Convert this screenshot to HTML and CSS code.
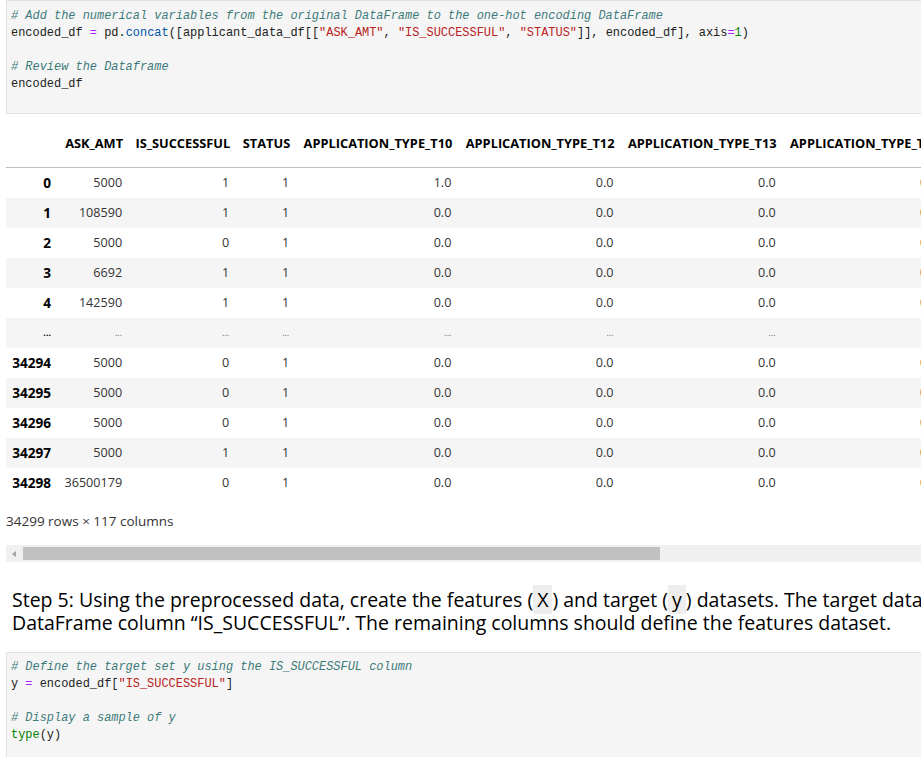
FILE: index.html
```html
<!DOCTYPE html>
<html>
<head>
<meta charset="utf-8">
<link rel="stylesheet" href="styles.css">
</head>
<body>
<div class="nb">
  <div class="cell code-cell first">
<pre class="code"><span class="c"># Add the numerical variables from the original DataFrame to the one-hot encoding DataFrame</span>
encoded_df <span class="o">=</span> pd.<span class="f">concat</span>([applicant_data_df[[<span class="s">"ASK_AMT"</span>, <span class="s">"IS_SUCCESSFUL"</span>, <span class="s">"STATUS"</span>]], encoded_df], axis<span class="o">=</span><span class="n">1</span>)

<span class="c"># Review the Dataframe</span>
encoded_df</pre>
  </div>

  <div class="output">
    <div class="table-wrap">
      <table class="df">
        <colgroup>
          <col class="w-idx"><col class="w-ask"><col class="w-succ"><col class="w-status">
          <col class="w-type"><col class="w-type"><col class="w-type"><col class="w-type"><col class="w-type">
        </colgroup>
        <thead>
          <tr><th></th><th>ASK_AMT</th><th>IS_SUCCESSFUL</th><th>STATUS</th><th>APPLICATION_TYPE_T10</th><th>APPLICATION_TYPE_T12</th><th>APPLICATION_TYPE_T13</th><th>APPLICATION_TYPE_T14</th><th>APPLICATION_TYPE_T15</th></tr>
        </thead>
        <tbody>
          <tr><th>0</th><td>5000</td><td>1</td><td>1</td><td>1.0</td><td>0.0</td><td>0.0</td><td>0.0</td><td>0.0</td></tr>
          <tr><th>1</th><td>108590</td><td>1</td><td>1</td><td>0.0</td><td>0.0</td><td>0.0</td><td>0.0</td><td>0.0</td></tr>
          <tr><th>2</th><td>5000</td><td>0</td><td>1</td><td>0.0</td><td>0.0</td><td>0.0</td><td>0.0</td><td>0.0</td></tr>
          <tr><th>3</th><td>6692</td><td>1</td><td>1</td><td>0.0</td><td>0.0</td><td>0.0</td><td>0.0</td><td>0.0</td></tr>
          <tr><th>4</th><td>142590</td><td>1</td><td>1</td><td>0.0</td><td>0.0</td><td>0.0</td><td>0.0</td><td>0.0</td></tr>
          <tr class="dots"><th>...</th><td>...</td><td>...</td><td>...</td><td>...</td><td>...</td><td>...</td><td>...</td><td>...</td></tr>
          <tr><th>34294</th><td>5000</td><td>0</td><td>1</td><td>0.0</td><td>0.0</td><td>0.0</td><td>0.0</td><td>0.0</td></tr>
          <tr><th>34295</th><td>5000</td><td>0</td><td>1</td><td>0.0</td><td>0.0</td><td>0.0</td><td>0.0</td><td>0.0</td></tr>
          <tr><th>34296</th><td>5000</td><td>0</td><td>1</td><td>0.0</td><td>0.0</td><td>0.0</td><td>0.0</td><td>0.0</td></tr>
          <tr><th>34297</th><td>5000</td><td>1</td><td>1</td><td>0.0</td><td>0.0</td><td>0.0</td><td>0.0</td><td>0.0</td></tr>
          <tr><th>34298</th><td>36500179</td><td>0</td><td>1</td><td>0.0</td><td>0.0</td><td>0.0</td><td>0.0</td><td>0.0</td></tr>
        </tbody>
      </table>
      <p class="shape">34299 rows × 117 columns</p>
    </div>
    <div class="hscroll">
      <div class="arrow"></div>
      <div class="thumb"></div>
    </div>
  </div>

  <div class="md">
    <p>Step 5: Using the preprocessed data, create the features (<code>X</code>) and target (<code>y</code>) datasets. The target dataset should be defined by the preprocessed<br>DataFrame column “IS_SUCCESSFUL”. The remaining columns should define the features dataset.</p>
  </div>

  <div class="cell code-cell second">
<pre class="code"><span class="c"># Define the target set y using the IS_SUCCESSFUL column</span>
y <span class="o">=</span> encoded_df[<span class="s">"IS_SUCCESSFUL"</span>]

<span class="c"># Display a sample of y</span>
<span class="b">type</span>(y)</pre>
  </div>
</div>
</body>
</html>
```

FILE: styles.css
```css
html, body {
  margin: 0;
  padding: 0;
  background: #ffffff;
  overflow: hidden;
}

.nb {
  width: 1400px;
  padding-left: 6px;
  font-family: "Open Sans", "Noto Sans", sans-serif;
  color: #000;
}

.cell.code-cell {
  background: #f5f5f5;
  border: 1px solid #e0e0e0;
}

.cell.first {
  padding: 7px 4px 20px 4px;
}

.cell.second {
  margin-top: 18px;
  padding: 6px 4px 30px 4px;
}

.code {
  margin: 0;
  font-family: "Liberation Mono", "DejaVu Sans Mono", monospace;
  font-size: 11.95px;
  line-height: 17px;
  color: #212121;
  white-space: pre;
}

.code .c { color: #3d7b7b; font-style: italic; }
.code .s { color: #ba2121; }
.code .o { color: #aa22ff; }
.code .n { color: #008000; }
.code .f { color: #0055aa; }
.code .b { color: #008000; }

.output {
  padding-top: 14px;
}

.table-wrap {
  width: 915px;
  overflow: hidden;
}

.df {
  border-collapse: collapse;
  table-layout: fixed;
  width: 1100px;
  font-size: 12.6px;
  line-height: 18px;
  white-space: nowrap;
}

.w-idx { width: 51px; }
.w-ask { width: 71px; }
.w-succ { width: 107px; }
.w-status { width: 60px; }
.w-type { width: 162px; }

.df th, .df td {
  padding: 6px 6px;
  text-align: right;
  overflow: hidden;
}

.df thead th {
  font-weight: 700;
  font-size: 12.8px;
  color: #000;
  padding: 6px 5px 15px 5px;
  border-bottom: 1px solid #bdbdbd;
}

.df tbody th {
  font-weight: 700;
  font-size: 13.6px;
  color: #000;
}

.df tbody td {
  color: #333;
  font-weight: 400;
}

.df tbody tr:nth-child(even) {
  background: #f5f5f5;
}

.df tr.dots td, .df tr.dots th {
  font-size: 9px;
  color: #666;
}

.df tr.dots th {
  color: #000;
}

.shape {
  margin: 14px 0 0 0;
  font-size: 13.5px;
  line-height: 18px;
  color: #333;
}

.hscroll {
  margin-top: 15px;
  height: 17px;
  background: #f0f0f0;
  display: flex;
  align-items: center;
  width: 1200px;
}

.arrow {
  width: 0;
  height: 0;
  margin-left: 6px;
  margin-right: 7px;
  border-top: 3.5px solid transparent;
  border-bottom: 3.5px solid transparent;
  border-right: 4px solid #a3a3a3;
}

.thumb {
  width: 637px;
  height: 13px;
  background: #c1c1c1;
}

.md {
  padding: 26px 0 0 6px;
}

.md p {
  margin: 0;
  font-size: 19.5px;
  line-height: 23px;
  color: #000;
  white-space: nowrap;
}

.md code {
  font-family: inherit;
  background: #eeeeee;
  padding: 1px 4px;
}
```
